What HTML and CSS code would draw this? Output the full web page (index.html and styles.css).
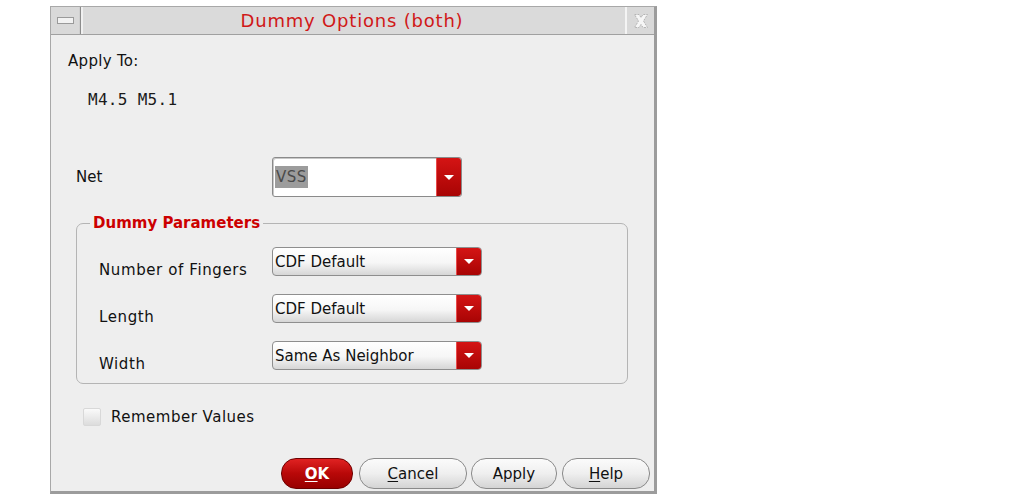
FILE: index.html
```html
<!DOCTYPE html>
<html>
<head>
<meta charset="utf-8">
<link rel="stylesheet" href="styles.css">
</head>
<body>
<div class="window">
  <div class="titlebar">
    <div class="tb-btn tb-min"><span class="min-icon"></span></div>
    <div class="tb-title">Dummy Options (both)</div>
    <div class="tb-btn tb-close">
      <svg width="18" height="18" viewBox="0 0 18 18">
        <path d="M2.5 2.5 L7 2.5 L9 5.5 L11 2.5 L15.5 2.5 L11.5 9 L15.5 15.5 L11 15.5 L9 12.5 L7 15.5 L2.5 15.5 L6.5 9 Z" fill="#f6f6f6" stroke="#b4b4b4" stroke-width="1" stroke-dasharray="2 1"/>
      </svg>
    </div>
  </div>
  <div class="content">
    <div class="apply-label">Apply To:</div>
    <div class="apply-value">M4.5 M5.1</div>
    <div class="net-row">
      <div class="net-label">Net</div>
      <div class="net-combo">
        <span class="net-text"><span class="sel">VSS</span></span>
        <span class="drop-btn net-drop"><span class="tri"></span></span>
      </div>
    </div>
    <fieldset class="group">
      <legend class="group-title">Dummy Parameters</legend>
      <div class="param-row">
        <div class="param-label">Number of Fingers</div>
        <div class="combo"><span class="combo-text">CDF Default</span><span class="drop-btn"><span class="tri"></span></span></div>
      </div>
      <div class="param-row">
        <div class="param-label">Length</div>
        <div class="combo"><span class="combo-text">CDF Default</span><span class="drop-btn"><span class="tri"></span></span></div>
      </div>
      <div class="param-row">
        <div class="param-label">Width</div>
        <div class="combo"><span class="combo-text">Same As Neighbor</span><span class="drop-btn"><span class="tri"></span></span></div>
      </div>
    </fieldset>
    <div class="check-row">
      <span class="checkbox"></span>
      <span class="check-label">Remember Values</span>
    </div>
    <div class="buttons">
      <div class="btn btn-ok"><u>O</u>K</div>
      <div class="btn btn-cancel"><u>C</u>ancel</div>
      <div class="btn btn-apply">Apply</div>
      <div class="btn btn-help"><u>H</u>elp</div>
    </div>
  </div>
</div>
</body>
</html>
```
FILE: styles.css
```css
html, body {
  margin: 0;
  padding: 0;
  background: #ffffff;
}
body {
  font-family: "DejaVu Sans", Verdana, sans-serif;
  color: #111;
}
.window {
  box-sizing: border-box;
  margin: 6px 0 0 50px;
  width: 607px;
  height: 488px;
  border-left: 1px solid #a8a8a8;
  border-top: 1px solid #a8a8a8;
  border-right: 3px solid #9c9c9c;
  border-bottom: 3px solid #9c9c9c;
  background: #eeeeee;
  display: flex;
  flex-direction: column;
}
.titlebar {
  height: 28px;
  display: flex;
  background: #dcdcdc;
  border-bottom: 1px solid #a0a0a0;
  box-sizing: border-box;
}
.tb-btn {
  width: 29px;
  display: flex;
  align-items: center;
  justify-content: center;
  background: #d9d9d9;
}
.tb-min {
  border-right: 1px solid #8c8c8c;
  box-shadow: inset -1px 0 0 #cfcfcf;
}
.min-icon {
  width: 15px;
  height: 5px;
  background: #f2f2f2;
  border: 1px solid #9a9a9a;
}
.tb-close {
  border-left: 2px solid #f4f4f4;
  width: 27px;
}
.tb-title {
  flex: 1;
  text-align: center;
  color: #d01818;
  font-size: 18px;
  letter-spacing: 0.8px;
  line-height: 27px;
  border-left: 2px solid #f0f0f0;
  background: #dadada;
  padding-right: 4px;
}
.content {
  flex: 1;
  display: flex;
  flex-direction: column;
  padding: 17px 3px 2px 17px;
  font-size: 15px;
}
.apply-label {
  line-height: 18px;
  letter-spacing: 0.3px;
}
.apply-value {
  margin: 21px 0 0 20px;
  font-family: "DejaVu Sans Mono", monospace;
  font-size: 16px;
  letter-spacing: 0.3px;
  line-height: 18px;
  color: #1a1a1a;
}
.net-row {
  margin: 48px 0 0 8px;
  display: flex;
  align-items: center;
}
.net-label {
  width: 196px;
  line-height: 18px;
}
.net-combo {
  box-sizing: border-box;
  width: 190px;
  height: 40px;
  border: 1px solid #8a8a8a;
  border-radius: 3px;
  background: #ffffff;
  box-shadow: inset 1px 1px 0 #c8c8c8;
  display: flex;
  align-items: center;
}
.net-text {
  flex: 1;
  padding-left: 2px;
}
.sel {
  display: inline-block;
  background: #9c9c9c;
  color: #4a4a4a;
  padding: 2px 1px;
  line-height: 18px;
  letter-spacing: 0.5px;
}
.drop-btn {
  width: 25px;
  align-self: stretch;
  background: linear-gradient(#d41414, #a80404);
  border-radius: 0 3px 3px 0;
  display: flex;
  align-items: center;
  justify-content: center;
  box-shadow: inset 1px 0 0 #e84a4a;
}
.tri {
  width: 0;
  height: 0;
  border-left: 5px solid transparent;
  border-right: 5px solid transparent;
  border-top: 5px solid #ffffff;
}
.group {
  margin: 17px 0 0 8px;
  width: 552px;
  box-sizing: border-box;
  height: 170px;
  border: 1px solid #b4b4b4;
  border-radius: 7px;
  padding: 0 0 0 22px;
}
.group-title {
  margin-left: -9px;
  padding: 0 3px;
  color: #cc0000;
  font-weight: bold;
  font-size: 15px;
  line-height: 18px;
}
.param-row {
  display: flex;
  align-items: flex-end;
  height: 29px;
  margin-top: 18px;
}
.param-row:first-of-type {
  margin-top: 15px;
}
.param-label {
  width: 173px;
  line-height: 18px;
  letter-spacing: 0.6px;
  margin-bottom: -3px;
}
.combo {
  box-sizing: border-box;
  width: 210px;
  height: 29px;
  border: 1px solid #8e8e8e;
  border-radius: 4px;
  background: linear-gradient(#ffffff, #f6f6f6 55%, #d6d6d6);
  display: flex;
  align-items: center;
}
.combo-text {
  flex: 1;
  padding-left: 2px;
  line-height: 18px;
  color: #111;
}
.check-row {
  margin: 24px 0 0 0;
  padding-left: 15px;
  display: flex;
  align-items: center;
  gap: 10px;
}
.checkbox {
  box-sizing: border-box;
  width: 18px;
  height: 18px;
  border: 1px solid #d8d8d8;
  border-radius: 2px;
  background: linear-gradient(#fafafa, #dcdcdc);
}
.check-label {
  line-height: 18px;
  letter-spacing: 0.5px;
}
.buttons {
  margin-top: auto;
  display: flex;
  justify-content: flex-end;
}
.btn {
  box-sizing: border-box;
  height: 31px;
  border-radius: 15px;
  border: 1px solid #8a8a8a;
  background: linear-gradient(#fbfbfb, #efefef 50%, #d4d4d4);
  display: flex;
  align-items: center;
  justify-content: center;
  font-size: 15px;
  color: #111;
}
.btn u {
  text-decoration-thickness: 1px;
  text-underline-offset: 2px;
}
.btn-ok {
  width: 72px;
  margin-right: 6px;
  background: linear-gradient(#e02222, #b80808 50%, #980000);
  border-color: #6e0000;
  color: #ffffff;
  font-weight: bold;
}
.btn-cancel { width: 108px; margin-right: 4px; }
.btn-apply { width: 86px; margin-right: 5px; }
.btn-help { width: 88px; margin-right: 1px; }
```
